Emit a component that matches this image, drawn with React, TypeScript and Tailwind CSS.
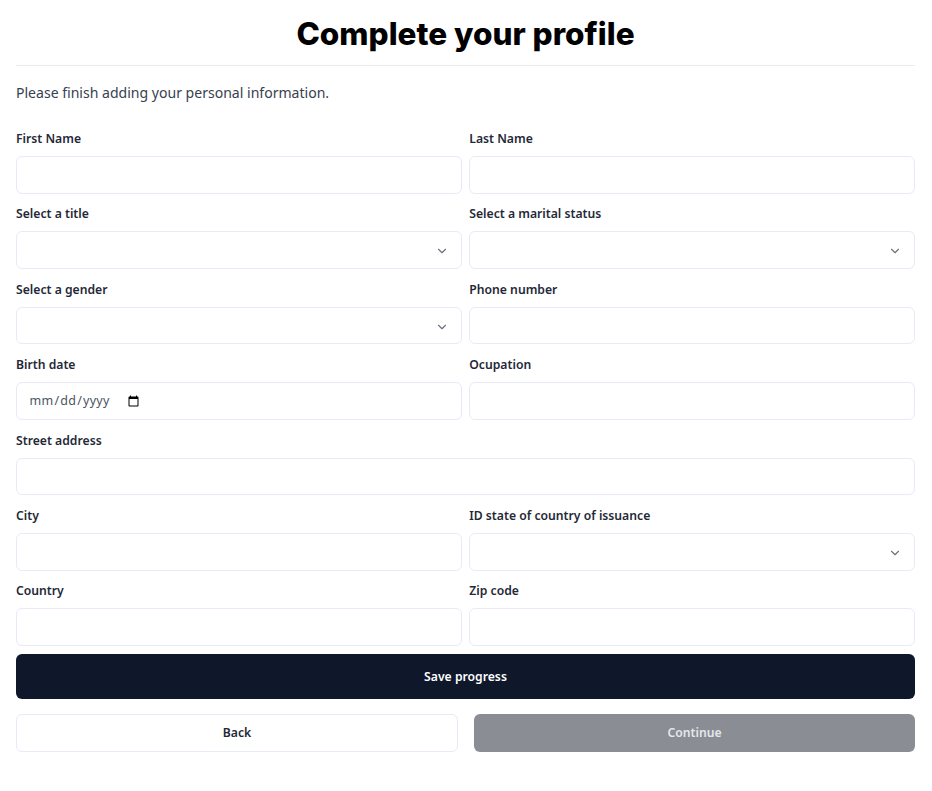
import { ChevronDown } from "lucide-react";

function Field({ label, children, wide }: { label: string; children: React.ReactNode; wide?: boolean }) {
  return (
    <div className={wide ? "col-span-2 flex flex-col" : "flex flex-col"}>
      <label className="h-[30px] pt-[3px] text-[12.2px] leading-[19px] font-semibold text-[#1f2937]">{label}</label>
      {children}
    </div>
  );
}

function TextBox() {
  return <input type="text" className="h-[37.6px] w-full rounded-[6px] border border-[#e8ebf5] bg-white px-3 outline-none" />;
}

function SelectBox() {
  return (
    <div className="relative h-[37.6px] w-full">
      <select className="h-full w-full appearance-none rounded-[6px] border border-[#e8ebf5] bg-white px-3 outline-none">
        <option></option>
      </select>
      <ChevronDown className="absolute top-[13px] right-[13px] h-[14px] w-[14px] text-[#6b7280]" strokeWidth={2} />
    </div>
  );
}

export default function App() {
  return (
    <div className="min-h-[791px] bg-white pr-[17px] pl-[16px] font-['Noto_Sans','Open_Sans',sans-serif]">
      <h1 className="h-[65px] pt-[12px] text-center font-['Inter',sans-serif] text-[31.5px] leading-[44px] font-extrabold text-black">
        Complete your profile
      </h1>
      <div className="h-px bg-[#e8ebf0]" />
      <p className="pt-[16.5px] text-[14.05px] leading-[20px] text-[#374151]">Please finish adding your personal information.</p>
      <form className="mt-[23.5px] grid grid-cols-2 gap-x-[7.5px] gap-y-[7.8px]">
        <Field label="First Name"><TextBox /></Field>
        <Field label="Last Name"><TextBox /></Field>
        <Field label="Select a title"><SelectBox /></Field>
        <Field label="Select a marital status"><SelectBox /></Field>
        <Field label="Select a gender"><SelectBox /></Field>
        <Field label="Phone number"><TextBox /></Field>
        <Field label="Birth date">
          <div className="flex h-[37.6px] w-full items-center rounded-[6px] border border-[#e8ebf5] bg-white pt-[1px] pl-[11.5px]">
            <input type="date" className="w-[113px] bg-transparent text-[12.5px] tracking-[0.25px] text-[#4b5563] outline-none" />
          </div>
        </Field>
        <Field label="Ocupation"><TextBox /></Field>
        <Field label="Street address" wide><TextBox /></Field>
        <Field label="City"><TextBox /></Field>
        <Field label="ID state of country of issuance"><SelectBox /></Field>
        <Field label="Country"><TextBox /></Field>
        <Field label="Zip code"><TextBox /></Field>
      </form>
      <button type="button" className="mt-[8px] h-[45px] w-full rounded-[6px] bg-[#0f172a] pt-[1px] text-[12.2px] font-semibold text-white">
        Save progress
      </button>
      <div className="mt-[15px] flex gap-[16px]">
        <button type="button" className="h-[37.6px] w-[442px] rounded-[6px] border border-[#e8ebf5] bg-white pt-[1px] text-[12.2px] font-semibold text-[#1f2937]">
          Back
        </button>
        <button type="button" disabled className="h-[37.6px] flex-1 rounded-[6px] bg-[#8a8d94] pt-[1px] text-[12.2px] font-semibold text-[#e5e7eb]">
          Continue
        </button>
      </div>
    </div>
  );
}
